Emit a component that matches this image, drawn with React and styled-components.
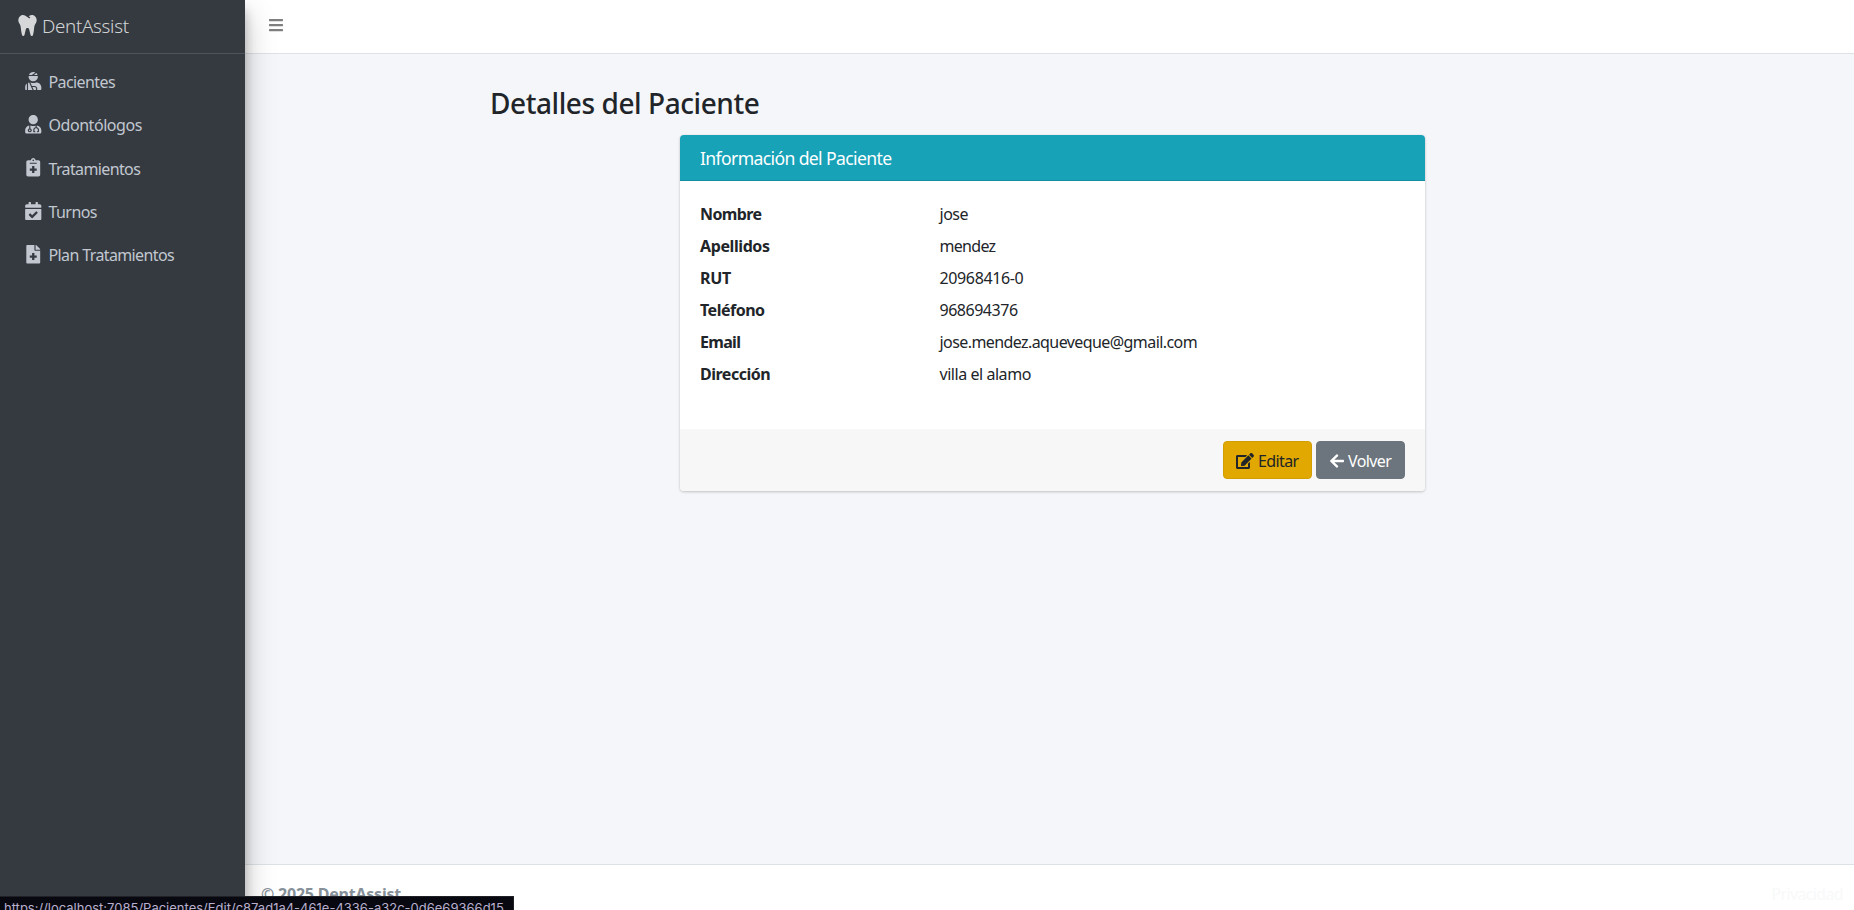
import React from 'react';
import styled, { createGlobalStyle } from 'styled-components';
import { FaTooth, FaUserInjured, FaUserMd, FaNotesMedical, FaCalendarCheck, FaFileMedical, FaBars, FaEdit, FaArrowLeft } from 'react-icons/fa';

const Global = createGlobalStyle`
  * { box-sizing: border-box; }
  body { margin: 0; overflow: hidden; background: #f4f6f9; color: #212529;
    font: 400 16px/24px 'Segoe UI', 'Noto Sans', sans-serif; }
  a { color: inherit; text-decoration: none; }
  h2, h3, dl, dd { margin: 0; }
`;
const Shell = styled.div`display: flex; width: 100%; height: 910px; overflow: hidden;`;
const Sidebar = styled.aside`
  width: 245px; flex: none; background: #343a40; color: #c2c7d0; z-index: 2;
  box-shadow: 0 14px 28px rgba(0,0,0,.25), 0 10px 10px rgba(0,0,0,.22);
`;
const Brand = styled.a`
  display: flex; align-items: center; height: 54px; padding: 0 0 2px 18px; gap: 5px;
  border-bottom: 1px solid #4b545c; color: rgba(255,255,255,.8);
  font-size: 18.8px; font-weight: 300;
  svg { width: 19px; height: 21px; }
`;
const Nav = styled.nav`display: flex; flex-direction: column; padding-top: 6.5px;`;
const NavLink = styled.a`
  display: flex; align-items: center; height: 43.3px; padding-left: 24px; gap: 6.5px;
`;
const NavIcon = styled.span`
  display: flex; justify-content: center; width: 18px; padding-bottom: 2px; font-size: 18.5px;
  svg { flex: none; }
`;
const Label = styled.span`
  white-space: nowrap; letter-spacing: ${p => p.$track || 0}px;
`;
const Main = styled.div`flex: 1; display: flex; flex-direction: column; min-width: 0;`;
const Topbar = styled.header`
  height: 54px; flex: none; padding: 17px 0 0 23px; background: #fff;
  border-bottom: 1px solid #dee2e6; color: rgba(0,0,0,.5);
  svg { display: block; }
`;
const Content = styled.main`flex: 1; padding: 30px 0 0 245px;`;
const Title = styled.h2`font-size: 28px; line-height: 38px; font-weight: 500;`;
const Card = styled.section`
  width: 745px; margin: 13px 0 0 190px; background: #fff; border-radius: 4px; overflow: hidden;
  box-shadow: 0 0 1px rgba(0,0,0,.125), 0 1px 3px rgba(0,0,0,.2);
`;
const CardHeader = styled.h3`
  height: 46px; padding: 0 20px; background: #17a2b8; color: #fff; border-bottom: 1px solid #148ea1;
  font-size: 17.6px; line-height: 47px; font-weight: 400;
`;
const Details = styled.dl`padding: 17px 20px 32px; height: 248px;`;
const Row = styled.div`display: grid; grid-template-columns: 239.5px 1fr; height: 32px; line-height: 32px;`;
const Term = styled.dt`font-weight: 700;`;
const CardFooter = styled.footer`
  display: flex; justify-content: flex-end; gap: 4px; height: 62px; padding: 12px 20px; background: #f7f7f7;
`;
const Button = styled.a`
  display: flex; align-items: center; gap: ${p => p.$gap}px; width: 89px; height: 38px; padding: 1px 0 0 12px;
  border: 1px solid ${p => p.$edge}; border-radius: 4px; background: ${p => p.$fill}; color: ${p => p.$ink};
  svg { flex: none; }
`;
const Footer = styled.footer`
  display: flex; justify-content: space-between; height: 46px; flex: none; padding: 17px 11px 0 16px;
  background: #fff; border-top: 1px solid #dee2e6; color: #869099; font-weight: 700;
`;
const Privacy = styled.a`color: #f8f9fa; font-weight: 400;`;
const LinkStatus = styled.div`
  position: fixed; left: 0; bottom: 0; z-index: 3; width: 514px; height: 14px; padding-left: 4px;
  overflow: hidden; background: #080810; border: solid #202027; border-width: 1px 1px 0 0;
  color: #b9b0ce; font: 13px/22px Inter, sans-serif; white-space: nowrap;
`;

const links = [
  [FaUserInjured, 'Pacientes', -0.6],
  [FaUserMd, 'Odontólogos', -0.45],
  [FaNotesMedical, 'Tratamientos', -0.63],
  [FaCalendarCheck, 'Turnos', -0.57],
  [FaFileMedical, 'Plan Tratamientos', -0.62],
];
const fields = [
  ['Nombre', -0.6, 'jose', -0.5],
  ['Apellidos', -0.4, 'mendez', -0.7],
  ['RUT', -0.3, '20968416-0', -0.37],
  ['Teléfono', -0.5, '968694376', -0.48],
  ['Email', -0.7, 'jose.mendez.aqueveque@gmail.com', -0.58],
  ['Dirección', -0.5, 'villa el alamo', -0.45],
];

export default function App() {
  return (
    <>
      <Global />
      <Shell>
        <Sidebar>
          <Brand href="#"><FaTooth /><Label $track={-0.32}>DentAssist</Label></Brand>
          <Nav>
            {links.map(([Icon, text, track]) => (
              <NavLink href="#" key={text}><NavIcon><Icon /></NavIcon><Label $track={track}>{text}</Label></NavLink>
            ))}
          </Nav>
        </Sidebar>
        <Main>
          <Topbar><FaBars /></Topbar>
          <Content>
            <Title><Label $track={-0.43}>Detalles del Paciente</Label></Title>
            <Card>
              <CardHeader><Label $track={-0.63}>Información del Paciente</Label></CardHeader>
              <Details>
                {fields.map(([term, termTrack, value, valueTrack]) => (
                  <Row key={term}>
                    <Term><Label $track={termTrack}>{term}</Label></Term>
                    <dd><Label $track={valueTrack}>{value}</Label></dd>
                  </Row>
                ))}
              </Details>
              <CardFooter>
                <Button href="#" $gap={4} $fill="#e0a800" $edge="#d39e00" $ink="#212529"><FaEdit size={18} /><Label $track={-0.6}>Editar</Label></Button>
                <Button href="#" $gap={3} $fill="#6c757d" $edge="#6c757d" $ink="#fff"><FaArrowLeft size={16} /><Label $track={-0.6}>Volver</Label></Button>
              </CardFooter>
            </Card>
          </Content>
          <Footer><Label $track={-0.22}>© 2025 DentAssist</Label><Privacy href="#"><Label $track={-0.65}>Privacidad</Label></Privacy></Footer>
        </Main>
      </Shell>
      <LinkStatus>https://localhost:7085/Pacientes/Edit/c87ad1a4-461e-4336-a32c-0d6e69366d15</LinkStatus>
    </>
  );
}
